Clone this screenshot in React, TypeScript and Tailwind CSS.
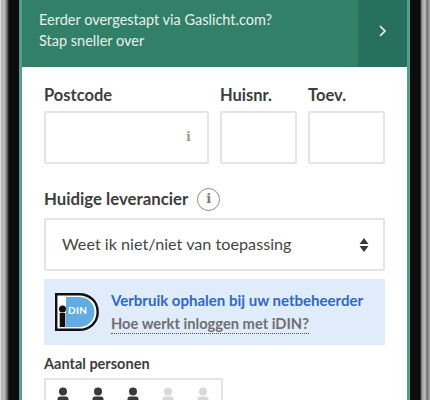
const font = { fontFamily: '"Lato", "Noto Sans", sans-serif' };
const slab = { fontFamily: '"DejaVu Serif", serif' };

function Person({ active }: { active: boolean }) {
  const fill = active ? '#3a3a3a' : '#d8d8d8';
  return (
    <svg width="12" height="22" viewBox="0 0 12 22" className="shrink-0">
      <circle cx="6" cy="4.5" r="4" fill={fill} />
      <path d="M.5 12c0-1.6 1-2.5 2.5-2.5h6c1.500 0 2.500.9 2.500 2.500V22H.5z" fill={fill} />
    </svg>
  );
}

function IdinLogo() {
  return (
    <svg width="44" height="38" viewBox="0 0 44 38" className="shrink-0">
      <path d="M1.200 1.200h23c10.500 0 18.500 7.500 18.500 17.800s-8 17.800-18.500 17.800h-23z" fill="#fff" stroke="#111" strokeWidth="2.400" />
      <path d="M11 4h13c8.500 0 15.500 6 15.500 15S32.500 34 24 34H11z" fill="#63ace3" />
      <circle cx="7.500" cy="16" r="3.500" fill="#111" />
      <rect x="4.700" y="20" width="5.600" height="14" fill="#111" />
      <text x="13" y="21" fontSize="10" fontWeight="700" fill="#fff" fontFamily="Lato, sans-serif" letterSpacing="0.3">DIN</text>
    </svg>
  );
}

function Field({ label, className }: { label: string; className: string }) {
  return (
    <div className={className}>
      <div className="text-[16.500px] leading-[22px] font-bold text-[#3d3d3d] mb-[5px]">{label}</div>
      <div className="relative h-[53px] bg-white border-2 border-[#e4e4e4] rounded-[2px]">
        {label === 'Postcode' && (
          <span className="absolute right-[16px] top-[15px] text-[13px] leading-[18px] font-bold text-[#9a9a9a]" style={slab}>i</span>
        )}
      </div>
    </div>
  );
}

export default function App() {
  return (
    <div className="flex w-[430px] h-[400px] overflow-hidden bg-white" style={font}>
      <div className="w-[19px] shrink-0 bg-[linear-gradient(90deg,#ececec_0px,#a8a8a8_2px,#c4c4c4_4px,#6e6e6e_7px,#0c0c0c_9px,#0c0c0c_100%)]" />
      <div className="w-[391px] shrink-0 bg-[#52a08c] px-[3px]">
        <div className="flex h-[67px] bg-[#338068] text-[#e6f1ed]">
          <div className="flex-1 pl-[17px] pt-[9px] text-[14.500px] leading-[21px]">
            <div>Eerder overgestapt via Gaslicht.com?</div>
            <div>Stap sneller over</div>
          </div>
          <div className="w-[49px] pb-[6px] bg-[#276f5e] flex items-center justify-center">
            <svg width="10" height="14" viewBox="0 0 10 14" fill="none" stroke="#f2f7f5" strokeWidth="1.600">
              <path d="M2 2l5 5-5 5" />
            </svg>
          </div>
        </div>
        <div className="bg-white h-[333px] px-[22px] pt-[17px]">
          <div className="flex gap-[11px]">
            <Field label="Postcode" className="w-[165px]" />
            <Field label="Huisnr." className="w-[77px]" />
            <Field label="Toev." className="w-[77px]" />
          </div>
          <div className="flex items-center gap-[9px] mt-[21px] h-[28px]">
            <span className="text-[16.800px] font-bold text-[#3d3d3d]">Huidige leverancier</span>
            <span className="w-[23px] h-[23px] rounded-full border-[1.500px] border-[#8a8a8a] flex items-center justify-center text-[13px] font-bold text-[#7a7a7a]" style={slab}>i</span>
          </div>
          <div className="flex items-center justify-between h-[53px] mt-[5px] pl-[16px] pr-[14px] border-2 border-[#e4e4e4] rounded-[2px]">
            <span className="text-[16.200px] text-[#454545]">Weet ik niet/niet van toepassing</span>
            <svg width="10" height="14" viewBox="0 0 10 14" fill="#3a3a3a">
              <path d="M5 0l4.500 6h-9zM5 14L.5 8h9z" />
            </svg>
          </div>
          <div className="flex items-center gap-[12px] h-[66px] mt-[8px] pl-[11px] bg-[#e1ecfa]">
            <IdinLogo />
            <div>
              <div className="text-[15px] leading-[22px] font-bold text-[#2f68c8]">Verbruik ophalen bij uw netbeheerder</div>
              <div className="text-[14.700px] leading-[20px] font-bold text-[#6f6f6f] inline-block border-b border-dotted border-[#555]">Hoe werkt inloggen met iDIN?</div>
            </div>
          </div>
          <div className="mt-[9px] text-[14.500px] leading-[20px] font-bold text-[#3d3d3d]">Aantal personen</div>
          <div className="flex justify-between w-[179px] h-[40px] mt-[4px] pt-[7px] pl-[11px] pr-[12px] border-2 border-[#e4e4e4]">
            <Person active />
            <Person active />
            <Person active />
            <Person active={false} />
            <Person active={false} />
          </div>
        </div>
      </div>
      <div className="w-[20px] shrink-0 bg-[linear-gradient(90deg,#0c0c0c_0px,#0c0c0c_10px,#9a9a9a_12px,#c0c0c0_15px,#707070_17px,#a8a8a8_20px)]" />
    </div>
  );
}
